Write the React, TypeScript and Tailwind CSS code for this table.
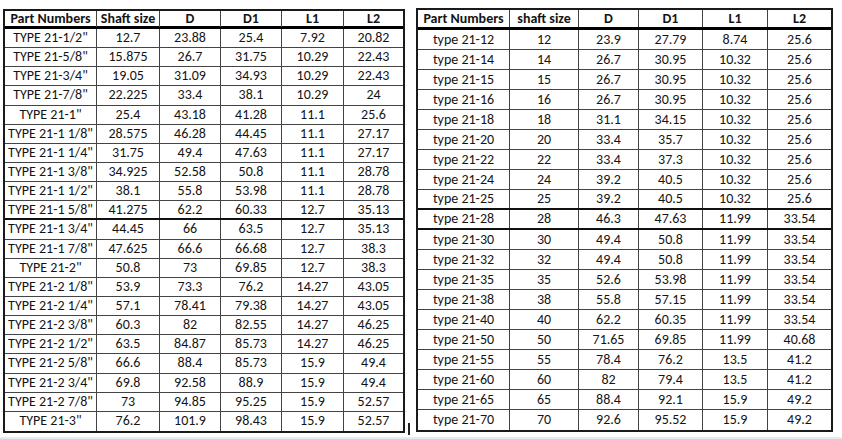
import React from 'react';

type Row = string[];

const leftRows: Row[] = [
    ['TYPE 21-1/2"', '12.7', '23.88', '25.4', '7.92', '20.82'],
    ['TYPE 21-5/8"', '15.875', '26.7', '31.75', '10.29', '22.43'],
    ['TYPE 21-3/4"', '19.05', '31.09', '34.93', '10.29', '22.43'],
    ['TYPE 21-7/8"', '22.225', '33.4', '38.1', '10.29', '24'],
    ['TYPE 21-1"', '25.4', '43.18', '41.28', '11.1', '25.6'],
    ['TYPE 21-1 1/8"', '28.575', '46.28', '44.45', '11.1', '27.17'],
    ['TYPE 21-1 1/4"', '31.75', '49.4', '47.63', '11.1', '27.17'],
    ['TYPE 21-1 3/8"', '34.925', '52.58', '50.8', '11.1', '28.78'],
    ['TYPE 21-1 1/2"', '38.1', '55.8', '53.98', '11.1', '28.78'],
    ['TYPE 21-1 5/8"', '41.275', '62.2', '60.33', '12.7', '35.13'],
    ['TYPE 21-1 3/4"', '44.45', '66', '63.5', '12.7', '35.13'],
    ['TYPE 21-1 7/8"', '47.625', '66.6', '66.68', '12.7', '38.3'],
    ['TYPE 21-2"', '50.8', '73', '69.85', '12.7', '38.3'],
    ['TYPE 21-2 1/8"', '53.9', '73.3', '76.2', '14.27', '43.05'],
    ['TYPE 21-2 1/4"', '57.1', '78.41', '79.38', '14.27', '43.05'],
    ['TYPE 21-2 3/8"', '60.3', '82', '82.55', '14.27', '46.25'],
    ['TYPE 21-2 1/2"', '63.5', '84.87', '85.73', '14.27', '46.25'],
    ['TYPE 21-2 5/8"', '66.6', '88.4', '85.73', '15.9', '49.4'],
    ['TYPE 21-2 3/4"', '69.8', '92.58', '88.9', '15.9', '49.4'],
    ['TYPE 21-2 7/8"', '73', '94.85', '95.25', '15.9', '52.57'],
    ['TYPE 21-3"', '76.2', '101.9', '98.43', '15.9', '52.57'],
];

const rightRows: Row[] = [
    ['type 21-12', '12', '23.9', '27.79', '8.74', '25.6'],
    ['type 21-14', '14', '26.7', '30.95', '10.32', '25.6'],
    ['type 21-15', '15', '26.7', '30.95', '10.32', '25.6'],
    ['type 21-16', '16', '26.7', '30.95', '10.32', '25.6'],
    ['type 21-18', '18', '31.1', '34.15', '10.32', '25.6'],
    ['type 21-20', '20', '33.4', '35.7', '10.32', '25.6'],
    ['type 21-22', '22', '33.4', '37.3', '10.32', '25.6'],
    ['type 21-24', '24', '39.2', '40.5', '10.32', '25.6'],
    ['type 21-25', '25', '39.2', '40.5', '10.32', '25.6'],
    ['type 21-28', '28', '46.3', '47.63', '11.99', '33.54'],
    ['type 21-30', '30', '49.4', '50.8', '11.99', '33.54'],
    ['type 21-32', '32', '49.4', '50.8', '11.99', '33.54'],
    ['type 21-35', '35', '52.6', '53.98', '11.99', '33.54'],
    ['type 21-38', '38', '55.8', '57.15', '11.99', '33.54'],
    ['type 21-40', '40', '62.2', '60.35', '11.99', '33.54'],
    ['type 21-50', '50', '71.65', '69.85', '11.99', '40.68'],
    ['type 21-55', '55', '78.4', '76.2', '13.5', '41.2'],
    ['type 21-60', '60', '82', '79.4', '13.5', '41.2'],
    ['type 21-65', '65', '88.4', '92.1', '15.9', '49.2'],
    ['type 21-70', '70', '92.6', '95.52', '15.9', '49.2'],
];

interface TableProps {
    header: string[];
    rows: Row[];
    cols: string;
    rowH: string;
    headH: string;
    thick: number[];
}

function SpecTable({ header, rows, cols, rowH, headH, thick }: TableProps) {
    return (
        <div className="flex flex-col border-2 border-[#1a1a1a] text-[14px] leading-[16px] text-[#141414]">
            {/* Header */}
            <div className={`grid ${cols} ${headH} border-b-[3px] border-black font-bold`}>
                {header.map((h, i) => (
                    <div
                        key={i}
                        className={`flex items-center justify-center whitespace-nowrap ${
                            i < header.length - 1 ? 'border-r border-[#444]' : ''
                        }`}
                    >
                        {h}
                    </div>
                ))}
            </div>

            {rows.map((row, r) => (
                <div
                    key={r}
                    className={`grid ${cols} ${rowH} ${
                        r === rows.length - 1
                            ? ''
                            : thick.includes(r)
                            ? 'border-b-2 border-[#111]'
                            : 'border-b border-[#444]'
                    }`}
                >
                    {row.map((c, i) => (
                        <div
                            key={i}
                            className={`flex items-center justify-center whitespace-nowrap ${
                                i < row.length - 1 ? 'border-r border-[#444]' : ''
                            }`}
                        >
                            {c}
                        </div>
                    ))}
                </div>
            ))}
        </div>
    );
}

export default function App() {
    return (
        <div className="w-[842px] h-[439px] flex flex-col bg-white font-['Carlito','Lato',sans-serif] overflow-hidden">
            <div className="flex h-[437px] pl-[3px]">
                <div className="pt-[9px]">
                    <SpecTable
                        header={['Part Numbers', 'Shaft size', 'D', 'D1', 'L1', 'L2']}
                        rows={leftRows}
                        cols="grid-cols-[92px_63px_61px_61px_62px_59px]"
                        headH="h-[18px]"
                        rowH="h-[19.15px]"
                        thick={[9]}
                    />
                </div>

                {/* stray cell edge between the sheets */}
                <div className="w-[11px] flex items-end pb-[2px]">
                    <div className="ml-[3px] w-[2px] h-[12px] bg-[#222]" />
                </div>

                <div className="pt-[8px]">
                    <SpecTable
                        header={['Part Numbers', 'shaft size', 'D', 'D1', 'L1', 'L2']}
                        rows={rightRows}
                        cols="grid-cols-[92px_69px_60px_64px_65px_63px]"
                        headH="h-[20px]"
                        rowH="h-[20px]"
                        thick={[8, 9]}
                    />
                </div>
            </div>
            <div className="h-[2px] bg-[#e4ebf3]" />
        </div>
    );
}
